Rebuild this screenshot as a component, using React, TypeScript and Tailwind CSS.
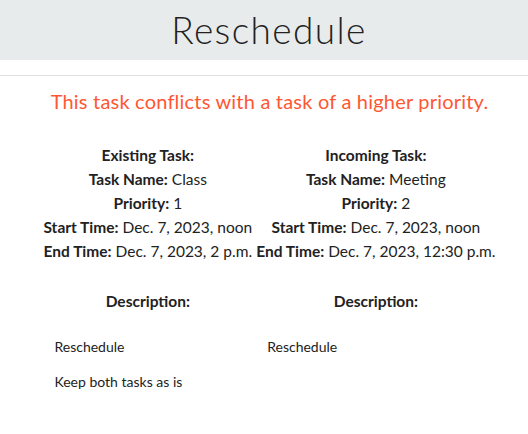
import React from 'react';

const existing = { name: 'Class', priority: '1', start: 'Dec. 7, 2023, noon', end: 'Dec. 7, 2023, 2 p.m.' };
const incoming = { name: 'Meeting', priority: '2', start: 'Dec. 7, 2023, noon', end: 'Dec. 7, 2023, 12:30 p.m.' };

const TaskInfo = ({ title, task }: { title: string; task: typeof existing }) => (
  <td className="px-[2px] py-0 text-center align-top">
    <div className="font-bold">{title}</div>
    <div><span className="font-bold">Task Name:</span> {task.name}</div>
    <div><span className="font-bold">Priority:</span> {task.priority}</div>
    <div><span className="font-bold">Start Time:</span> {task.start}</div>
    <div><span className="font-bold">End Time:</span> {task.end}</div>
  </td>
);

export default function App() {
  return (
    <div className="w-[528px] h-[434px] bg-white text-[#222] font-['Lato','Liberation_Sans',sans-serif]">
      <div className="h-[60px] bg-[#e8ebec] flex items-center justify-center pl-[10px]">
        <h1 className="text-[37px] font-light tracking-[1.4px] text-[#222]">Reschedule</h1>
      </div>
      <hr className="mt-[15px] border-t border-[#e0e0e0]" />
      <div className="pl-[11px]">
        <p className="mt-[10px] text-center text-[20px] tracking-[0.2px] text-[#ff5733]">
          This task conflicts with a task of a higher priority.
        </p>
        <table className="mx-auto mt-[27px] text-[15.5px] leading-[24px] border-collapse">
          <tbody>
            <tr>
              <TaskInfo title="Existing Task:" task={existing} />
              <TaskInfo title="Incoming Task:" task={incoming} />
            </tr>
            <tr>
              <td className="pt-[26px] text-center font-bold">Description:</td>
              <td className="pt-[26px] text-center font-bold">Description:</td>
            </tr>
            <tr>
              <td className="pt-[24px] pl-[13px] align-top text-[14px]">
                <div className="leading-[20px]">Reschedule</div>
                <div className="mt-[15px] leading-[20px]">Keep both tasks as is</div>
              </td>
              <td className="pt-[24px] pl-[13px] align-top text-[14px]">
                <div className="leading-[20px]">Reschedule</div>
              </td>
            </tr>
          </tbody>
        </table>
      </div>
    </div>
  );
}
